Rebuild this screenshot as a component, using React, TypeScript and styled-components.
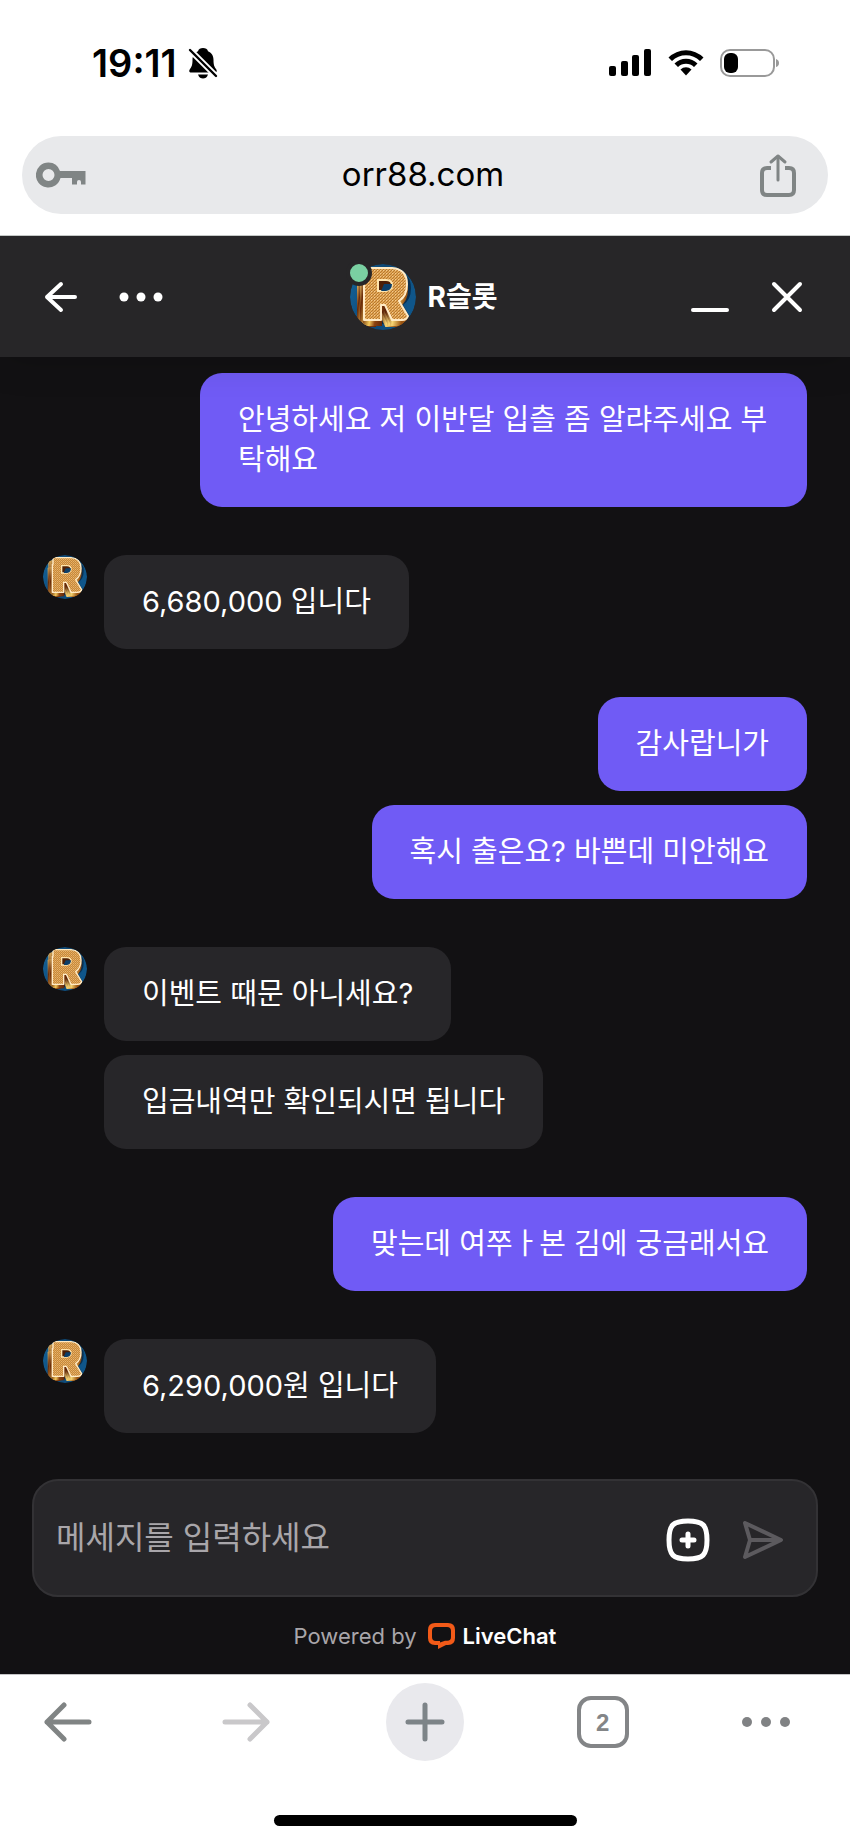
import React, { useState } from 'react'
import styled, { createGlobalStyle } from 'styled-components'

interface MessageType {
    text: string;
}

interface MessageGroupType {
    sender: 'me' | 'agent';
    messages: MessageType[];
}

const groups: MessageGroupType[] = [
    { sender: 'me', messages: [{ text: '안녕하세요 저 이반달 입츨 좀 알랴주세요 부탁해요' }] },
    { sender: 'agent', messages: [{ text: '6,680,000 입니다' }] },
    { sender: 'me', messages: [{ text: '감사랍니가' }, { text: '혹시 출은요? 바쁜데 미안해요' }] },
    { sender: 'agent', messages: [{ text: '이벤트 때문 아니세요?' }, { text: '입금내역만 확인되시면 됩니다' }] },
    { sender: 'me', messages: [{ text: '맞는데 여쭈ㅏ본 김에 궁금래서요' }] },
    { sender: 'agent', messages: [{ text: '6,290,000원 입니다' }] },
]

const R_SHAPE = 'M15 4 H42 Q57 5 57 20 Q57 32 49 37 L58 52 Q57 56 52 56 H42 L35 41 H31 V56 H14 V14 H15 Z'
const R_COUNTER = 'M28 16 V27 H36 Q42 26 42 21 Q42 16 36 16 Z'

const Logo = ({ size, id }: { size: number; id: string }) => (
    <svg width={size} height={size} viewBox="0 0 66 66" aria-hidden="true">
        <defs>
            <clipPath id={`${id}-clip`}>
                <circle cx="33" cy="33" r="33" />
            </clipPath>
            <linearGradient id={`${id}-bg`} x1="0" y1="0" x2="1" y2="0.3">
                <stop offset="0" stopColor="#14659c" />
                <stop offset="0.5" stopColor="#0d4673" />
                <stop offset="1" stopColor="#0f568a" />
            </linearGradient>
            <linearGradient id={`${id}-side`} x1="0" y1="0" x2="1" y2="0.2">
                <stop offset="0" stopColor="#f3cb72" />
                <stop offset="0.12" stopColor="#6a2b08" />
                <stop offset="0.3" stopColor="#f2c75a" />
                <stop offset="0.42" stopColor="#8a4210" />
                <stop offset="0.62" stopColor="#5a2206" />
                <stop offset="0.8" stopColor="#f7d774" />
                <stop offset="1" stopColor="#9a5412" />
            </linearGradient>
            <pattern id={`${id}-mesh`} width="3" height="3" patternUnits="userSpaceOnUse">
                <rect width="3" height="3" fill="#e0a656" />
                <path d="M0 3 L3 0" stroke="#b87830" strokeWidth="1" />
                <rect x="0" y="0" width="1" height="1" fill="#f3c98a" />
            </pattern>
        </defs>
        <g clipPath={`url(#${id}-clip)`}>
            <circle cx="33" cy="33" r="33" fill={`url(#${id}-bg)`} />
            <path d={R_SHAPE} transform="translate(4 4)" fill="#06182b" opacity="0.6" />
            <path d={R_SHAPE} transform="translate(-6 6)" fill={`url(#${id}-side)`} stroke={`url(#${id}-side)`} strokeWidth="2" />
            <path d={R_SHAPE} transform="translate(-3 5)" fill={`url(#${id}-side)`} stroke={`url(#${id}-side)`} strokeWidth="2" />
            <path d={R_SHAPE} transform="translate(0 5)" fill={`url(#${id}-side)`} stroke={`url(#${id}-side)`} strokeWidth="2" />
            <path d={R_SHAPE} fill={`url(#${id}-mesh)`} stroke="#ffeac4" strokeWidth="2" strokeLinejoin="round" />
            <path d={R_COUNTER} fill="#4d1f06" stroke="#ffe4ac" strokeWidth="2" />
            <path d="M34 20 H42 Q42 26 36 27 L31 27 Z" fill="#0d3f69" />
        </g>
    </svg>
)

const App = () => {
    const [message, setMessage] = useState<string>('');

    return (
        <Screen>
            <GlobalStyle />

            {/* Status Bar */}
            <StatusBar>
                <StatusSide>
                    <Clock>19:11</Clock>
                    <svg width="30" height="32" viewBox="0 0 30 32">
                        <path d="M15 1 C17.500 1 19.500 2 20 4.200 C24 6 25.500 9 25.500 13 C25.500 18 26.500 20 28 22 C29.500 24 28.500 25.500 27 25.500 H3 C1.500 25.500 .5 24 2 22 C3.500 20 4.500 18 4.500 13 C4.500 9 6 6 10 4.200 C10.500 2 12.500 1 15 1 Z" fill="#000" />
                        <path d="M10 27.500 H20 C19 30.500 17 31.500 15 31.500 C13 31.500 11 30.500 10 27.500 Z" fill="#000" />
                        <path d="M0 1 L30 31" stroke="#fff" strokeWidth="6" />
                        <path d="M2 3 L28 29" stroke="#000" strokeWidth="2.400" strokeLinecap="round" />
                    </svg>
                </StatusSide>
                <StatusSide>
                    <svg width="43" height="28" viewBox="0 0 43 28">
                        <rect x="0" y="17" width="7" height="10" rx="2" />
                        <rect x="12" y="12" width="7" height="15" rx="2" />
                        <rect x="23" y="6" width="7" height="21" rx="2" />
                        <rect x="35" y="0" width="7" height="27" rx="2" />
                    </svg>
                    <WifiIcon width="38" height="28" viewBox="0 0 38 28">
                        <path d="M1.500 8.500 A25 25 0 0 1 36.500 8.500 L33 12 A20 20 0 0 0 5 12 Z" />
                        <path d="M7.500 14.500 A16.500 16.500 0 0 1 30.500 14.500 L27 18 A11.500 11.500 0 0 0 11 18 Z" />
                        <path d="M13.500 20.500 A8 8 0 0 1 24.500 20.500 L19 26.500 Z" />
                    </WifiIcon>
                    <svg width="60" height="28" viewBox="0 0 60 28">
                        <rect x="1" y="1" width="53" height="26" rx="9" fill="none" stroke="#999" strokeWidth="2" />
                        <rect x="4" y="4" width="14" height="20" rx="6" />
                        <path d="M56 10 Q59 11 59 14 Q59 17 56 18 Z" fill="#999" />
                    </svg>
                </StatusSide>
            </StatusBar>

            {/* Address Bar */}
            <AddressBar>
                <IconButton aria-label="Passwords">
                    <svg width="50" height="26" viewBox="0 0 50 26">
                        <path fillRule="evenodd" fill="#808585" d="M12.500 0.500 A12.500 12.500 0 0 1 24 9 H49.500 V22.500 H45 V20 Q45 18 43 18 Q41 18 41 20 V22.500 H36 V16 H24.500 A12.500 12.500 0 1 1 12.500 0.500 Z M12.500 7 A6 6 0 1 0 12.500 19 A6 6 0 1 0 12.500 7 Z" />
                    </svg>
                </IconButton>
                <Address href="#">orr88.com</Address>
                <IconButton aria-label="Share">
                    <svg width="36" height="43" viewBox="0 0 36 43" fill="none" stroke="#808585" strokeWidth="4" strokeLinecap="round">
                        <path d="M11 14 H7 Q2 14 2 19 V36 Q2 41 7 41 H29 Q34 41 34 36 V19 Q34 14 29 14 H25" strokeLinecap="butt" />
                        <path d="M18 26 V3" strokeWidth="3" />
                        <path d="M11 8 L18 2 L25 8" strokeWidth="3" strokeLinejoin="round" />
                    </svg>
                </IconButton>
            </AddressBar>

            <Chat>
                {/* Chat Header */}
                <ChatHeader>
                    <HeaderActions>
                        <IconButton aria-label="Back">
                            <svg width="34" height="32" viewBox="0 0 34 32" fill="none" stroke="#fff" strokeWidth="4" strokeLinecap="round" strokeLinejoin="round">
                                <path d="M17 3 L3 16 L17 29 M3 16 H31" />
                            </svg>
                        </IconButton>
                        <IconButton aria-label="Menu">
                            <svg width="44" height="10" viewBox="0 0 44 10" fill="#fff">
                                <circle cx="5" cy="5" r="4.500" />
                                <circle cx="22" cy="5" r="4.500" />
                                <circle cx="39" cy="5" r="4.500" />
                            </svg>
                        </IconButton>
                    </HeaderActions>
                    <Agent>
                        <AgentPhoto>
                            <Logo size={66} id="agent" />
                            <OnlineDot />
                        </AgentPhoto>
                        <AgentName>R슬롯</AgentName>
                    </Agent>
                    <HeaderActions $end>
                        <IconButton aria-label="Minimize">
                            <svg width="40" height="32" viewBox="0 0 40 32" stroke="#fff" strokeWidth="4" strokeLinecap="round">
                                <path d="M3 29 H37" />
                            </svg>
                        </IconButton>
                        <IconButton aria-label="Close">
                            <svg width="32" height="32" viewBox="0 0 32 32" stroke="#fff" strokeWidth="4" strokeLinecap="round">
                                <path d="M3 3 L29 29 M29 3 L3 29" />
                            </svg>
                        </IconButton>
                    </HeaderActions>
                </ChatHeader>

                {/* Messages */}
                <MessageList>
                    {groups.map((group, idx) => (
                        <MessageGroup key={idx} $mine={group.sender === 'me'}>
                            {group.sender === 'agent' && <Logo size={44} id={`logo${idx}`} />}
                            <Bubbles $mine={group.sender === 'me'}>
                                {group.messages.map((item) => (
                                    <Bubble key={item.text} $mine={group.sender === 'me'}>{item.text}</Bubble>
                                ))}
                            </Bubbles>
                        </MessageGroup>
                    ))}
                </MessageList>

                {/* Composer */}
                <Composer onSubmit={(e) => e.preventDefault()}>
                    <MessageInput
                        aria-label="메세지를 입력하세요"
                        placeholder="메세지를 입력하세요"
                        value={message}
                        onChange={(e) => setMessage(e.target.value)}
                    />
                    <IconButton type="button" aria-label="Add">
                        <svg width="44" height="44" viewBox="0 0 44 44" fill="none" stroke="#fff" strokeWidth="5" strokeLinecap="round">
                            <path d="M22 3 C37 3 41 7 41 22 C41 37 37 41 22 41 C7 41 3 37 3 22 C3 7 7 3 22 3 Z" />
                            <path d="M22 16 V28 M16 22 H28" />
                        </svg>
                    </IconButton>
                    <IconButton type="submit" aria-label="Send">
                        <svg width="42" height="40" viewBox="0 0 42 40" fill="none" stroke="#5c5a5e" strokeWidth="4" strokeLinejoin="round" strokeLinecap="round">
                            <path d="M3 3 L39 20 L3 37 L8 20 Z M8 20 H38" />
                        </svg>
                    </IconButton>
                </Composer>

                <PoweredBy>
                    Powered by
                    <Brand href="#">
                        <svg width="27" height="26" viewBox="0 0 27 26">
                            <path fillRule="evenodd" fill="#f25a18" d="M7 0 H20 Q27 0 27 7 V15 Q27 22 20 22 H18 L10 26 V22 H7 Q0 22 0 15 V7 Q0 0 7 0 Z M8 4 Q4 4 4 8 V14 Q4 18 8 18 H12 V19.500 L17 17.800 L19 17.800 Q23 18 23 14 V8 Q23 4 19 4 Z" />
                        </svg>
                        LiveChat
                    </Brand>
                </PoweredBy>
            </Chat>

            {/* Browser Toolbar */}
            <Toolbar>
                <ToolButton aria-label="Previous page">
                    <svg width="48" height="40" viewBox="0 0 48 40" fill="none" stroke="#808484" strokeWidth="5" strokeLinecap="round" strokeLinejoin="round">
                        <path d="M20 3 L3 20 L20 37 M3 20 H45" />
                    </svg>
                </ToolButton>
                <ToolButton aria-label="Next page">
                    <svg width="48" height="40" viewBox="0 0 48 40" fill="none" stroke="#c9c8ca" strokeWidth="5" strokeLinecap="round" strokeLinejoin="round">
                        <path d="M28 3 L45 20 L28 37 M45 20 H3" />
                    </svg>
                </ToolButton>
                <ToolButton $round aria-label="New tab">
                    <svg width="40" height="40" viewBox="0 0 40 40" stroke="#7d8488" strokeWidth="5" strokeLinecap="round">
                        <path d="M20 3 V37 M3 20 H37" />
                    </svg>
                </ToolButton>
                <ToolButton aria-label="Tabs">
                    <TabCount>2</TabCount>
                </ToolButton>
                <ToolButton $start aria-label="More">
                    <svg width="48" height="12" viewBox="0 0 48 12" fill="#808284">
                        <circle cx="5" cy="6" r="5" />
                        <circle cx="24" cy="6" r="5" />
                        <circle cx="43" cy="6" r="5" />
                    </svg>
                </ToolButton>
            </Toolbar>
            <HomeIndicator />
        </Screen>
    )
}

export default App

const GlobalStyle = createGlobalStyle`
    * {
        box-sizing: border-box;
    }
    body {
        margin: 0;
        background: #fff;
        font-family: Inter, "Noto Sans CJK KR", sans-serif;
    }
    svg {
        display: block;
        flex-shrink: 0;
    }
`;

const Screen = styled.div`
    display: flex;
    flex-direction: column;
    min-height: 100vh;
`;

const StatusBar = styled.div`
    display: flex;
    justify-content: space-between;
    align-items: center;
    height: 136px;
    padding: 0 70px 10px 92px;
`;

const StatusSide = styled.div`
    display: flex;
    align-items: center;
    gap: 11px;
`;

const WifiIcon = styled.svg`
    margin: 0 4px;
`;

const Clock = styled.span`
    font-size: 38px;
    font-weight: 600;
    line-height: 40px;
`;

const IconButton = styled.button`
    display: flex;
    padding: 0;
    border: none;
    background: none;
    cursor: pointer;
`;

const AddressBar = styled.div`
    display: flex;
    justify-content: space-between;
    align-items: center;
    height: 78px;
    margin: 0 22px 21px;
    padding: 0 32px 0 14px;
    border-radius: 39px;
    background: #e8e9eb;
`;

const Address = styled.a`
    padding-bottom: 2px;
    color: #000;
    font-size: 33px;
    line-height: 40px;
    text-decoration: none;
`;

const Chat = styled.main`
    display: flex;
    flex-direction: column;
    flex: 1;
    overflow: hidden;
    border-top: 1px solid #c4c8c6;
    border-bottom: 1px solid #c4c4c6;
    background: #121113;
    color: #fff;
`;

const ChatHeader = styled.header`
    position: relative;
    z-index: 1;
    display: grid;
    grid-template-columns: 1fr auto 1fr;
    align-items: center;
    height: 121px;
    padding: 0 47px 0 44px;
    background: #272628;
    box-shadow: 0 4px 36px rgba(0, 0, 0, 0.15);
`;

const HeaderActions = styled.div<{ $end?: boolean }>`
    display: flex;
    align-items: center;
    justify-content: ${props => props.$end ? 'flex-end' : 'flex-start'};
    gap: 41px;
`;

const Agent = styled.div`
    display: flex;
    align-items: center;
    gap: 12px;
`;

const AgentPhoto = styled.div`
    position: relative;
`;

const OnlineDot = styled.span`
    position: absolute;
    top: -4px;
    left: -4px;
    width: 26px;
    height: 26px;
    border: 4px solid #272628;
    border-radius: 50%;
    background: #7ad0a2;
`;

const AgentName = styled.h1`
    margin: 0;
    font-size: 28px;
    font-weight: 700;
    line-height: 40px;
`;

const MessageList = styled.section`
    display: flex;
    flex-direction: column;
    flex: 1;
    gap: 48px;
    padding: 16px 43px 44px;
`;

const MessageGroup = styled.div<{ $mine: boolean }>`
    display: flex;
    align-items: flex-start;
    justify-content: ${props => props.$mine ? 'flex-end' : 'flex-start'};
    gap: 17px;
`;

const Bubbles = styled.div<{ $mine: boolean }>`
    display: flex;
    flex-direction: column;
    align-items: ${props => props.$mine ? 'flex-end' : 'flex-start'};
    gap: 14px;
    max-width: calc(100% - 157px);
`;

const Bubble = styled.p<{ $mine: boolean }>`
    margin: 0;
    padding: 27px 38px;
    border-radius: 22px;
    background: ${props => props.$mine ? '#705bf5' : '#272629'};
    font-size: 29px;
    line-height: 40px;
`;

const Composer = styled.form`
    display: flex;
    align-items: center;
    gap: 32px;
    height: 118px;
    margin: 0 32px;
    padding: 4px 32px 0 22px;
    border: 2px solid #333235;
    border-radius: 26px;
    background: #272629;
`;

const MessageInput = styled.input`
    flex: 1;
    min-width: 0;
    padding: 0 0 4px;
    border: none;
    outline: none;
    background: none;
    color: #fff;
    font-family: inherit;
    font-size: 32px;
    line-height: 48px;
    &::placeholder {
        color: #a9a6aa;
        opacity: 1;
    }
`;

const PoweredBy = styled.div`
    display: flex;
    align-items: center;
    justify-content: center;
    gap: 11px;
    height: 77px;
    color: #a9a6aa;
    font-size: 22px;
`;

const Brand = styled.a`
    display: flex;
    align-items: center;
    gap: 8px;
    color: #fff;
    font-weight: 600;
    text-decoration: none;
`;

const Toolbar = styled.nav`
    display: flex;
    justify-content: space-between;
    align-items: center;
    padding: 8px 30px 0 29px;
`;

const ToolButton = styled.button<{ $round?: boolean; $start?: boolean }>`
    display: flex;
    align-items: center;
    justify-content: ${props => props.$start ? 'flex-start' : 'center'};
    width: 78px;
    height: 78px;
    padding: 0;
    border: none;
    border-radius: 50%;
    background: ${props => props.$round ? '#e9e9ed' : 'none'};
    cursor: pointer;
`;

const TabCount = styled.span`
    width: 52px;
    height: 52px;
    border: 4px solid #838587;
    border-radius: 14px;
    color: #838587;
    font-size: 24px;
    font-weight: 700;
    line-height: 46px;
    text-align: center;
`;

const HomeIndicator = styled.div`
    width: 303px;
    height: 11px;
    margin: 54px auto 17px;
    border-radius: 6px;
    background: #000;
`;
